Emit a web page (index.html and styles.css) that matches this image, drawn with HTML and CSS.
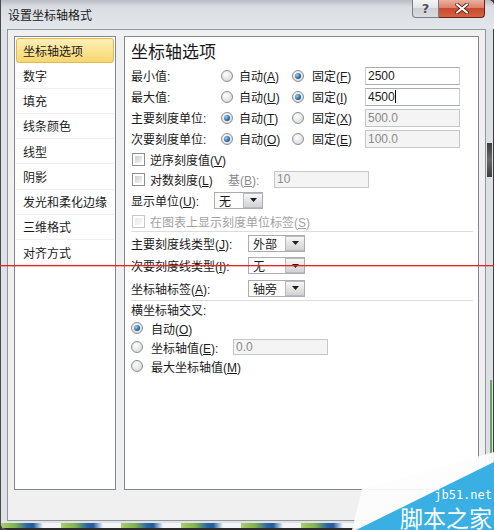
FILE: index.html
```html
<!DOCTYPE html>
<html lang="zh-CN">
<head>
  <meta charset="UTF-8">
  <meta name="viewport" content="width=device-width, initial-scale=1.0">
  <title>设置坐标轴格式</title>
  <link rel="stylesheet" href="styles.css">
</head>
<body>
  <div class="window">
    <div class="titlebar">
      <span class="title">设置坐标轴格式</span>
      <div class="caption">
        <div class="btn-help">?</div>
        <div class="btn-close">
          <svg width="14" height="11" viewBox="0 0 14 11">
            <path d="M2 1.5 L12 9.5 M12 1.5 L2 9.5" stroke="#5a1a10" stroke-width="3.6" stroke-linecap="round"/>
            <path d="M2 1.5 L12 9.5 M12 1.5 L2 9.5" stroke="#fff" stroke-width="2.2" stroke-linecap="round"/>
          </svg>
        </div>
      </div>
    </div>

    <div class="frame">
      <div class="client">
        <ul class="nav">
          <li class="active">坐标轴选项</li>
          <li>数字</li>
          <li>填充</li>
          <li>线条颜色</li>
          <li>线型</li>
          <li>阴影</li>
          <li>发光和柔化边缘</li>
          <li>三维格式</li>
          <li>对齐方式</li>
        </ul>

        <div class="pane">
          <h2>坐标轴选项</h2>

          <div class="opt-grid">
            <span>最小值:</span>
            <label class="choice"><span class="radio"></span><span>自动(<u>A</u>)</span></label>
            <label class="choice"><span class="radio on"></span><span>固定(<u>F</u>)</span></label>
            <div class="field">2500</div>

            <span>最大值:</span>
            <label class="choice"><span class="radio"></span><span>自动(<u>U</u>)</span></label>
            <label class="choice"><span class="radio on"></span><span>固定(<u>I</u>)</span></label>
            <div class="field"><span>4500</span><span class="caret"></span></div>

            <span>主要刻度单位:</span>
            <label class="choice"><span class="radio on"></span><span>自动(<u>T</u>)</span></label>
            <label class="choice"><span class="radio"></span><span>固定(<u>X</u>)</span></label>
            <div class="field off">500.0</div>

            <span>次要刻度单位:</span>
            <label class="choice"><span class="radio on"></span><span>自动(<u>O</u>)</span></label>
            <label class="choice"><span class="radio"></span><span>固定(<u>E</u>)</span></label>
            <div class="field off">100.0</div>
          </div>

          <div class="check-row">
            <span class="check"></span><span>逆序刻度值(<u>V</u>)</span>
          </div>
          <div class="check-row">
            <span class="check"></span>
            <span class="w-log">对数刻度(<u>L</u>)</span>
            <span class="w-base dim">基(<u>B</u>):</span>
            <div class="field off short">10</div>
          </div>
          <div class="check-row unit-row">
            <span class="w-unit">显示单位(<u>U</u>):</span>
            <div class="combo w-none">
              <span class="val">无</span>
              <span class="arrow"><svg width="7" height="4" viewBox="0 0 7 4"><path d="M0 0 H7 L3.5 4 Z" fill="#1e1e1e"/></svg></span>
            </div>
          </div>
          <div class="check-row disabled">
            <span class="check off"></span><span>在图表上显示刻度单位标签(<u>S</u>)</span>
          </div>

          <div class="sep"></div>

          <div class="combo-row">
            <span class="w-tick">主要刻度线类型(<u>J</u>):</span>
            <div class="combo">
              <span class="val">外部</span>
              <span class="arrow"><svg width="7" height="4" viewBox="0 0 7 4"><path d="M0 0 H7 L3.5 4 Z" fill="#1e1e1e"/></svg></span>
            </div>
          </div>
          <div class="combo-row">
            <span class="w-tick">次要刻度线类型(<u>I</u>):</span>
            <div class="combo">
              <span class="val">无</span>
              <span class="arrow"><svg width="7" height="4" viewBox="0 0 7 4"><path d="M0 0 H7 L3.5 4 Z" fill="#1e1e1e"/></svg></span>
            </div>
          </div>
          <div class="combo-row">
            <span class="w-tick">坐标轴标签(<u>A</u>):</span>
            <div class="combo">
              <span class="val">轴旁</span>
              <span class="arrow"><svg width="7" height="4" viewBox="0 0 7 4"><path d="M0 0 H7 L3.5 4 Z" fill="#1e1e1e"/></svg></span>
            </div>
          </div>

          <div class="sep"></div>

          <div class="sub-title">横坐标轴交叉:</div>
          <div class="radio-row">
            <span class="radio on"></span><span>自动(<u>O</u>)</span>
          </div>
          <div class="radio-row">
            <span class="radio"></span>
            <span class="w-axis">坐标轴值(<u>E</u>):</span>
            <div class="field off low">0.0</div>
          </div>
          <div class="radio-row">
            <span class="radio"></span><span>最大坐标轴值(<u>M</u>)</span>
          </div>
        </div>
      </div>
      <div class="frame-right"></div>
    </div>
    <div class="frame-bottom"></div>
  </div>

  <div class="redline"></div>

  <svg class="watermark" width="142" height="90" viewBox="0 0 142 90">
    <polygon points="10,49 142,12 142,90 0,90" fill="#fdfdfd" fill-opacity="0.93"/>
    <polygon points="4,90 142,22 142,90" fill="#3aafe3"/>
    <text x="140" y="59" text-anchor="end" class="wm-url">jb51.net</text>
    <text x="140" y="87" text-anchor="end" class="wm-name">脚本之家</text>
  </svg>
</body>
</html>
```

FILE: styles.css
```css
body {
  margin: 0;
  width: 494px;
  height: 530px;
  overflow: hidden;
  position: relative;
  background: #3a3a3a;
  font-family: "Liberation Sans", "Noto Sans CJK SC", sans-serif;
  font-size: 12px;
  color: #1b1b1b;
}

u {
  text-decoration: underline;
}

.window {
  width: 494px;
  height: 530px;
  box-sizing: border-box;
  border-left: 1px solid #4a4a4a;
  border-radius: 0 6px 0 7px;
  overflow: hidden;
  background: #dfe2e6;
  display: flex;
  flex-direction: column;
}

/* Title bar */
.titlebar {
  height: 29px;
  flex: none;
  display: flex;
  align-items: center;
  padding-left: 7px;
  background: linear-gradient(#b9bdc3, #dadee3 7px, #e3e6ea);
}

.title {
  color: #1a1a1a;
}

.caption {
  margin-left: auto;
  margin-right: 9px;
  align-self: flex-start;
  display: flex;
}

.btn-help {
  width: 27px;
  height: 18px;
  box-sizing: border-box;
  border: 1px solid #7b7e83;
  border-top: none;
  border-radius: 0 0 0 4px;
  background: linear-gradient(#f4f5f6, #e2e4e7 45%, #cdd0d4 50%, #dadcdf);
  display: flex;
  align-items: center;
  justify-content: center;
  color: #4b5058;
  font: bold 13px "DejaVu Sans", sans-serif;
  text-shadow: 0 0 2px #fff;
}

.btn-close {
  width: 46px;
  height: 18px;
  box-sizing: border-box;
  border: 1px solid #6b2219;
  border-top: none;
  border-left: none;
  border-radius: 0 0 4px 0;
  background: linear-gradient(#eab0a0, #dc826a 45%, #c8492f 50%, #d6633f);
  display: flex;
  align-items: center;
  justify-content: center;
}

/* Frame + client area */
.frame {
  display: flex;
  height: 492px;
  flex: none;
}

.client {
  margin-left: 6px;
  width: 479px;
  height: 492px;
  box-sizing: border-box;
  border: 1px solid #8f969e;
  background: #f0f0f0;
  padding: 6px 6px 30px;
  display: flex;
  gap: 8px;
}

.frame-right {
  width: 8px;
  background:
    linear-gradient(#3e3e3e, #6a6a6a 50%, #3e3e3e) 1px 114px / 5px 34px no-repeat,
    linear-gradient(#6f9f64, #6f9f64) 4px 351px / 2px 80px no-repeat,
    linear-gradient(to right, #dcdfe3 0 7px, #3d3d3d 7px);
}

.frame-bottom {
  height: 9px;
  flex: none;
  background:
    linear-gradient(#dfe2e6 0 2px, transparent 2px 7px, #2b2b2b 7px),
    repeating-linear-gradient(90deg, #a9cf6c 0px, #80b34b 14px, #2c67a8 26px, #1f5a9a 32px, #f2f4f5 42px, #f2f4f5 60px);
}

/* Left navigation */
.nav {
  width: 102px;
  box-sizing: border-box;
  margin: 0;
  padding: 1px;
  list-style: none;
  border: 1px solid #828790;
  background: #fff;
}

.nav li {
  height: 25.25px;
  box-sizing: border-box;
  padding-left: 7px;
  display: flex;
  align-items: center;
  border-bottom: 1px solid #f0f0f0;
}

.nav li.active {
  padding-left: 6px;
  border: 1px solid #e0b94f;
  border-radius: 3px;
  background: linear-gradient(#fdefb8, #fbe394 50%, #f8d66f);
}

/* Right pane */
.pane {
  flex: 1;
  border: 1px solid #828790;
  background: #fff;
  padding: 4px 0 0 6px;
}

.pane h2 {
  margin: 0;
  font-size: 17px;
  font-weight: normal;
  line-height: 24px;
  color: #1a1a1a;
}

.opt-grid {
  display: grid;
  grid-template-columns: 90px 71px 73px 95px;
  grid-auto-rows: 21px;
  align-items: center;
}

.choice {
  display: flex;
  align-items: center;
  gap: 6px;
}

.choice + .choice {
  gap: 8px;
}

.radio {
  width: 12px;
  height: 12px;
  box-sizing: border-box;
  flex: none;
  border-radius: 50%;
  border: 1px solid #8b8e92;
  background: radial-gradient(circle at 40% 35%, #ffffff, #d3d6da 85%);
  display: flex;
  align-items: center;
  justify-content: center;
}

.radio.on::after {
  content: "";
  width: 6px;
  height: 6px;
  border-radius: 50%;
  background: radial-gradient(circle at 35% 35%, #9fd3f6, #2b6ca3 55%, #12406a);
}

.field {
  height: 18px;
  box-sizing: border-box;
  border: 1px solid #abadb3;
  border-left-color: #c8ccd2;
  border-right-color: #c8ccd2;
  background: #fff;
  padding: 0 2px;
  display: flex;
  align-items: center;
}

.field.off {
  background: #f4f4f4;
  color: #8a8a8a;
  border-color: #c3c6cb;
}

.field.short {
  width: 95px;
  height: 17px;
}

.field.low {
  width: 95px;
  height: 16px;
}

.caret {
  width: 1px;
  height: 13px;
  background: #000;
}

.check-row {
  height: 20px;
  display: flex;
  align-items: center;
}

.unit-row {
  height: 22px;
}

.check {
  width: 13px;
  height: 13px;
  box-sizing: border-box;
  flex: none;
  margin: 0 5px 0 1px;
  padding: 2px;
  border: 1px solid #8e8f8f;
  background: linear-gradient(135deg, #c9cdd3, #f5f6f7) content-box, #fff;
}

.check.off {
  border-color: #c8c8c8;
  background: linear-gradient(135deg, #e6e7e9, #fafafa) content-box, #fff;
}

.disabled {
  color: #a2a2a2;
}

.dim {
  color: #8c8c8c;
}

.w-log { width: 78px; }
.w-base { width: 46px; }
.w-unit { width: 83px; }
.w-tick { width: 117px; }
.w-axis { width: 82px; }

.combo {
  width: 57px;
  height: 17px;
  box-sizing: border-box;
  border: 1px solid #abadb3;
  background: #fff;
  display: flex;
}

.combo.w-none {
  width: 49px;
}

.combo .val {
  flex: 1;
  padding-left: 4px;
  display: flex;
  align-items: center;
}

.combo .arrow {
  width: 19px;
  box-sizing: border-box;
  border: 1px solid #b8bcc2;
  border-right: none;
  background: linear-gradient(#f7f7f7, #e4e4e4 50%, #d3d3d3);
  display: flex;
  align-items: center;
  justify-content: center;
}

.sep {
  height: 1px;
  margin-right: 5px;
  background: #dcdcdc;
}

.combo-row {
  height: 22.5px;
  display: flex;
  align-items: center;
}

.sub-title {
  height: 18px;
  display: flex;
  align-items: center;
}

.radio-row {
  height: 19px;
  display: flex;
  align-items: center;
}

.radio-row .radio {
  margin-right: 8px;
}

/* Overlays */
.redline {
  position: absolute;
  left: 0;
  top: 265px;
  width: 494px;
  height: 1px;
  background: #e8231a;
  box-shadow: 0 1px 0 rgba(210, 60, 50, 0.35);
}

.watermark {
  position: absolute;
  right: 0;
  bottom: 0;
}

.wm-url {
  font-family: "DejaVu Sans Mono", monospace;
  font-size: 12px;
  fill: #fff;
}

.wm-name {
  font-family: "Noto Sans CJK SC", sans-serif;
  font-size: 23px;
  fill: #fff;
}
```
